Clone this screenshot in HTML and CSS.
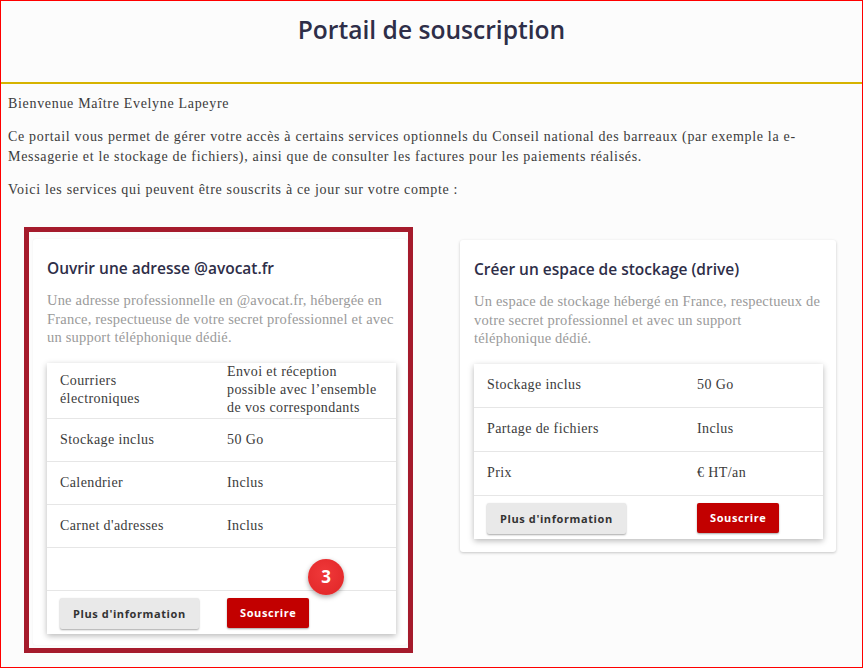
FILE: index.html
```html
<!DOCTYPE html>
<html lang="fr">
<head>
    <meta charset="UTF-8">
    <meta name="viewport" content="width=device-width, initial-scale=1.0">
    <title>Portail de souscription</title>
    <link rel="stylesheet" href="styles.css">
</head>
<body>

<div class="page">
    <header class="top">
        <h1>Portail de souscription</h1>
    </header>

    <div class="content">
        <p>Bienvenue Maître Evelyne Lapeyre</p>
        <p>Ce portail vous permet de gérer votre accès à certains services optionnels du Conseil national des barreaux (par exemple la e-Messagerie et le stockage de fichiers), ainsi que de consulter les factures pour les paiements réalisés.</p>
        <p>Voici les services qui peuvent être souscrits à ce jour sur votre compte :</p>

        <div class="services">
            <div class="highlight">
                <div class="card">
                    <h2>Ouvrir une adresse @avocat.fr</h2>
                    <p class="desc">Une adresse professionnelle en @avocat.fr, hébergée en France, respectueuse de votre secret professionnel et avec un support téléphonique dédié.</p>
                    <div class="table mail">
                        <div class="row tall">
                            <span>Courriers électroniques</span>
                            <span>Envoi et réception possible avec l’ensemble de vos correspondants</span>
                        </div>
                        <div class="row"><span>Stockage inclus</span><span>50 Go</span></div>
                        <div class="row"><span>Calendrier</span><span>Inclus</span></div>
                        <div class="row"><span>Carnet d'adresses</span><span>Inclus</span></div>
                        <div class="row"><span></span><span></span></div>
                        <div class="row actions">
                            <span><button class="btn">Plus d'information</button></span>
                            <span><button class="btn red">Souscrire</button></span>
                        </div>
                        <div class="badge">3</div>
                    </div>
                </div>
            </div>

            <div class="card second">
                <h2>Créer un espace de stockage (drive)</h2>
                <p class="desc">Un espace de stockage hébergé en France, respectueux de votre secret professionnel et avec un support téléphonique dédié.</p>
                <div class="table drive">
                    <div class="row"><span>Stockage inclus</span><span>50 Go</span></div>
                    <div class="row"><span>Partage de fichiers</span><span>Inclus</span></div>
                    <div class="row"><span>Prix</span><span>€ HT/an</span></div>
                    <div class="row actions">
                        <span><button class="btn">Plus d'information</button></span>
                        <span><button class="btn red">Souscrire</button></span>
                    </div>
                </div>
            </div>
        </div>
    </div>
</div>

</body>
</html>
```

FILE: styles.css
```css
/* Portail de souscription */
body {
    margin: 0;
    font-family: "Liberation Serif", "DejaVu Serif", serif;
    color: #3b3b3b;
    background-color: #ffffff;
}
.page {
    box-sizing: border-box;
    width: 863px;
    height: 668px;
    border: 1px solid #ff0000;
    background-color: #fcfcfc;
    overflow: hidden;
}
.top {
    height: 81px;
    border-bottom: 2px solid #d6b300;
    display: flex;
    justify-content: center;
}
.top h1 {
    margin: 15px 0 0;
    font-family: "Open Sans", sans-serif;
    font-weight: 600;
    font-size: 24.6px;
    line-height: 28px;
    color: #2e2e48;
}
.content {
    padding: 10px 7px 0;
}
.content > p {
    margin: 0 0 13px;
    font-size: 14px;
    letter-spacing: 0.68px;
    line-height: 20px;
}
.services {
    display: flex;
    align-items: flex-start;
    gap: 47px;
    margin-top: 27px;
    padding-left: 16px;
}
.highlight {
    border: 5px solid #a51b2c;
    padding: 7px 1px 3px 4px;
}
.card {
    box-sizing: border-box;
    width: 374px;
    background-color: #ffffff;
    padding: 19px 10px 11px 14px;
    border-radius: 3px;
    box-shadow: 0 0 2px rgba(0, 0, 0, 0.06);
}
.card.second {
    width: 376px;
    margin-top: 13px;
    padding: 19px 14px 13px;
    box-shadow: 0 1px 3px rgba(0, 0, 0, 0.22);
}
.card h2 {
    margin: 0;
    font-family: "Open Sans", sans-serif;
    font-weight: 600;
    font-size: 15.5px;
    line-height: 20px;
    color: #2e2e48;
}
.desc {
    margin: 13px 0 16px;
    font-size: 14.5px;
    letter-spacing: 0.2px;
    line-height: 18.5px;
    color: #9a9a9a;
}
.table {
    position: relative;
    width: 349px;
    background-color: #ffffff;
    box-shadow: 0 2px 6px rgba(0, 0, 0, 0.28);
}
.row {
    display: grid;
    min-height: 43px;
    align-items: center;
    border-top: 1px solid #e6e6e6;
    font-size: 14px;
    letter-spacing: 0.4px;
    line-height: 18px;
}
.row:first-child {
    border-top: none;
}
.mail .row {
    grid-template-columns: 180px 1fr;
    min-height: 42px;
}
.drive .row {
    grid-template-columns: 223px 1fr;
}
.row span:first-child {
    padding-left: 13px;
}
.row span:last-child {
    padding-right: 8px;
}
.mail .row.tall {
    min-height: 55px;
}
.row.tall span:first-child {
    padding-right: 30px;
}
.row.actions {
    min-height: 44px;
    align-items: start;
    padding-top: 7px;
    box-sizing: border-box;
}
.btn {
    font-family: "Open Sans", sans-serif;
    font-weight: 700;
    font-size: 11px;
    letter-spacing: 0.6px;
    white-space: nowrap;
    height: 31px;
    padding: 0 13px;
    border: none;
    border-radius: 2px;
    color: #333333;
    background-color: #e9e9e9;
    box-shadow: 0 1px 2px rgba(0, 0, 0, 0.35);
}
.btn.red {
    color: #ffffff;
    background-color: #c20000;
    padding: 0 13px;
    height: 30px;
}
.badge {
    position: absolute;
    left: 261px;
    top: 196px;
    width: 36px;
    height: 36px;
    border-radius: 50%;
    background: radial-gradient(circle at 45% 40%, #f0393a, #df2426);
    box-shadow: 0 2px 5px rgba(0, 0, 0, 0.35);
    color: #ffffff;
    font-family: "Open Sans", sans-serif;
    font-weight: 700;
    font-size: 17px;
    display: flex;
    align-items: center;
    justify-content: center;
}
```
